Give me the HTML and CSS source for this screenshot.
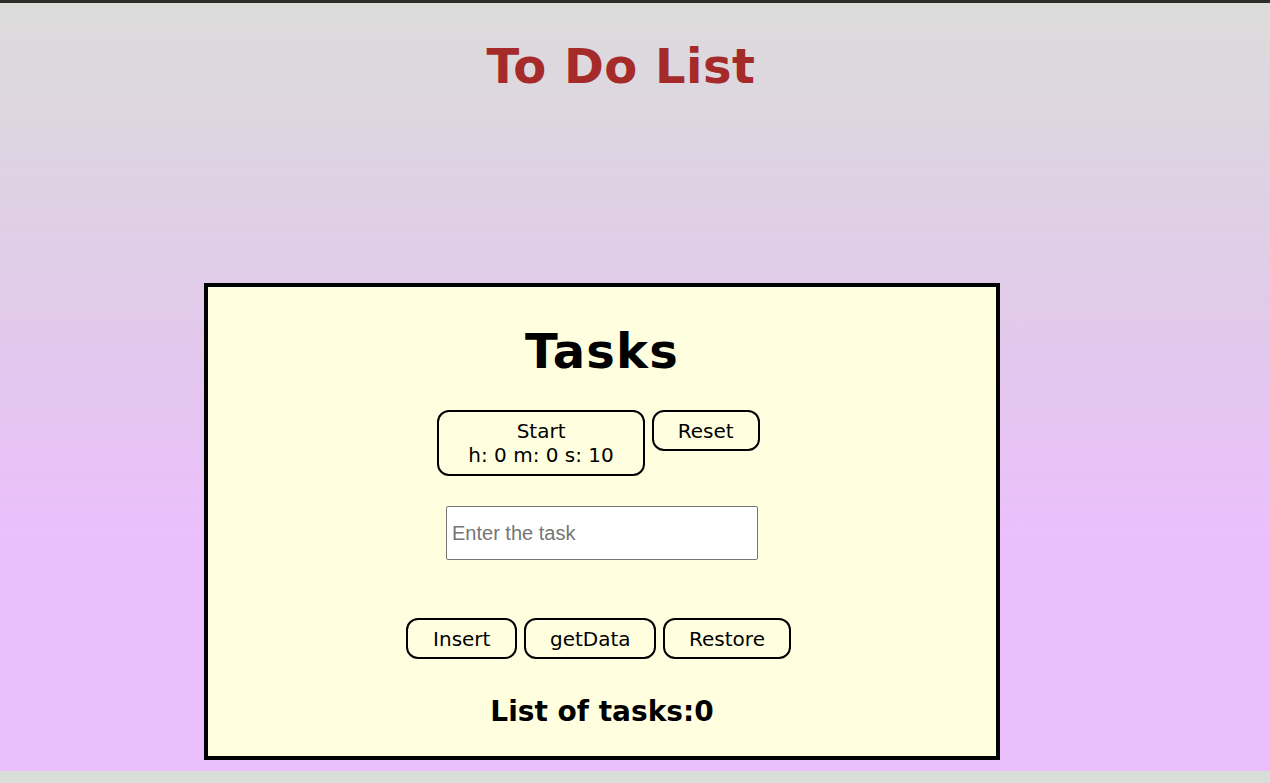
FILE: index.html
```html
<!DOCTYPE html>
<html lang="en">
<head>
<meta charset="utf-8">
<title>To Do List</title>
<link rel="stylesheet" href="styles.css">
</head>
<body>
<div class="topbar"></div>
<main class="page">
  <header class="header">
    <h1 class="title">To Do List</h1>
  </header>
  <section class="card">
    <h2 class="card-title">Tasks</h2>
    <div class="btn-row">
      <button class="btn btn-timer">Start<br>h: 0 m: 0 s: 10</button>
      <button class="btn">Reset</button>
    </div>
    <div class="input-row">
      <input class="task-input" type="text" placeholder="Enter the task">
    </div>
    <div class="btn-row btn-row-actions">
      <button class="btn btn-insert">Insert</button>
      <button class="btn btn-get">getData</button>
      <button class="btn">Restore</button>
    </div>
    <p class="count">List of tasks:0</p>
  </section>
</main>
<div class="footer-strip"></div>
</body>
</html>
```
FILE: styles.css
```css
html, body {
  margin: 0;
  padding: 0;
}
body {
  background: #d9ded9;
  font-family: "DejaVu Sans", Verdana, sans-serif;
  height: 783px;
  overflow: hidden;
}
.topbar {
  height: 3px;
  background: #2b2d2a;
}
.page {
  height: 768px;
  background: linear-gradient(to bottom, #dcdcdb 0%, #e0cce8 36%, #ebbffc 70%, #ebbffc 100%);
  display: flex;
  flex-direction: column;
}
.header {
  padding-right: 28px;
  text-align: center;
}
.title {
  margin: 0;
  padding-top: 35px;
  font-size: 48px;
  line-height: 56px;
  font-weight: bold;
  letter-spacing: 0.5px;
  color: #a52a2a;
}
.card {
  margin-top: 189px;
  margin-left: 204px;
  width: 788px;
  height: 469px;
  border: 4px solid #000;
  background: #ffffe0;
  display: flex;
  flex-direction: column;
  align-items: center;
}
.card-title {
  margin: 36px 0 0;
  font-size: 48px;
  line-height: 56px;
  font-weight: bold;
  letter-spacing: 1.2px;
  color: #000;
}
.btn-row {
  display: flex;
  align-items: flex-start;
  justify-content: center;
  gap: 7px;
  margin-top: 31px;
  padding-right: 7px;
}
.btn {
  font-family: "DejaVu Sans", Verdana, sans-serif;
  font-size: 20px;
  line-height: 24px;
  color: #000;
  background: transparent;
  border: 2px solid #000;
  border-radius: 12px;
  padding: 7px 24px 6px;
  margin: 0;
  text-align: center;
}
.btn-timer {
  padding-left: 29px;
  padding-right: 29px;
  padding-bottom: 7px;
}
.btn-insert {
  padding-left: 25px;
  padding-right: 25px;
}
.btn-get {
  padding-left: 23.5px;
  padding-right: 23.5px;
}
.input-row {
  margin-top: 30px;
  display: flex;
  justify-content: center;
}
.task-input {
  box-sizing: border-box;
  width: 312px;
  height: 54px;
  margin: 0;
  border: 1px solid #767676;
  border-radius: 2px;
  background: #fff;
  padding: 0 5px;
  font-family: "Liberation Sans", Arial, sans-serif;
  font-size: 20px;
  color: #000;
}
.task-input::placeholder {
  color: #757575;
}
.btn-row-actions {
  margin-top: 58px;
}
.count {
  margin: 36px 0 0;
  font-size: 28px;
  line-height: 34px;
  font-weight: bold;
  color: #000;
}
.footer-strip {
  height: 12px;
  background: #d9ded9;
}
```
